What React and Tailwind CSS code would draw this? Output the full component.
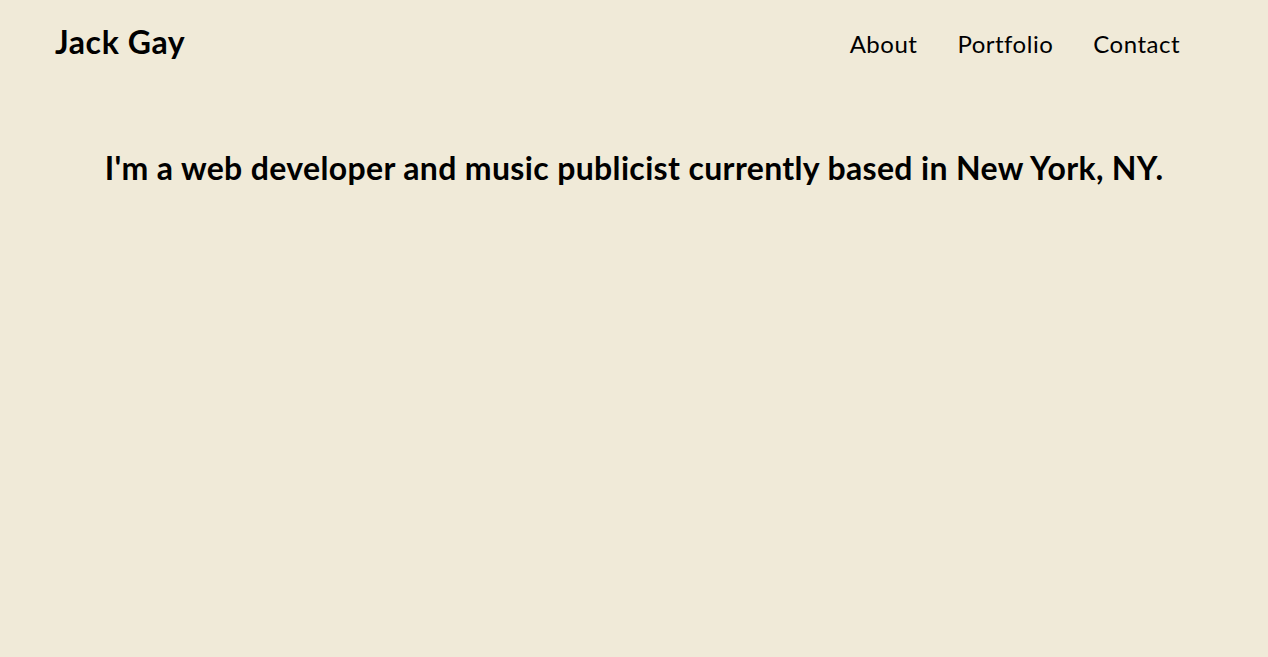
import React from "react";

const links = ["About", "Portfolio", "Contact"];

export default function App() {
  return (
    <div
      className="min-h-screen bg-[#f0ead8] text-black"
      style={{ fontFamily: "Lato, 'Open Sans', sans-serif" }}
    >
      <header className="flex items-center justify-between pl-[55px] pr-[88px] pt-[22px]">
        <a href="#" className="text-[32px] font-bold leading-[40px] tracking-[0.6px]">
          Jack Gay
        </a>
        <nav className="flex gap-10 pt-[4px]">
          {links.map((link) => (
            <a key={link} href="#" className="text-[24px] leading-[32px] tracking-[0.5px]">
              {link}
            </a>
          ))}
        </nav>
      </header>

      <main className="pt-[86px] text-center">
        <h1 className="text-[32px] font-bold leading-[40px] tracking-[0.35px]">
          I'm a web developer and music publicist currently based in New York, NY.
        </h1>
      </main>
    </div>
  );
}
